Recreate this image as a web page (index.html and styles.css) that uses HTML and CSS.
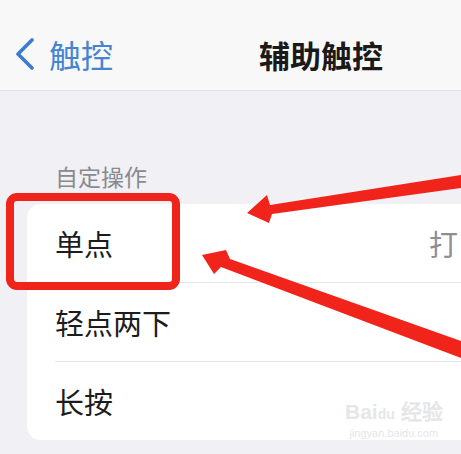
FILE: index.html
```html
<!DOCTYPE html>
<html lang="zh-CN">
<head>
  <meta charset="UTF-8">
  <meta name="viewport" content="width=device-width, initial-scale=1.0">
  <title>辅助触控</title>
  <link rel="stylesheet" href="styles.css">
</head>
<body>

  <div class="navbar">
    <a class="back" href="#">
      <svg class="chevron" width="24" height="32" viewBox="0 0 24 32">
        <polyline points="19,2 5,16 19,30" fill="none" stroke="#3b7bd0" stroke-width="3.6" stroke-linecap="round" stroke-linejoin="round"/>
      </svg>
      <span>触控</span>
    </a>
    <h1 class="title">辅助触控</h1>
  </div>

  <div class="section">
    <div class="section-header">自定操作</div>
    <div class="card">
      <div class="row">
        <span class="label">单点</span>
        <span class="value">打</span>
      </div>
      <div class="row">
        <span class="label">轻点两下</span>
      </div>
      <div class="row">
        <span class="label">长按</span>
      </div>
    </div>
  </div>

  <!-- annotation drawn over the screenshot -->
  <svg class="marks" width="461" height="454" viewBox="0 0 461 454">
    <rect x="10" y="197" width="166" height="89" rx="7" fill="none" stroke="#f0241b" stroke-width="8"/>
    <polygon points="247,213 267,195 270,205 461,175 461,188 272,214 269,223" fill="#f0241b"/>
    <polygon points="202,255 226,250 230,259 461,341 461,358 221,267 214,274" fill="#f0241b"/>
  </svg>

  <div class="watermark">
    <div class="wm-logo">Bai<span class="wm-du">du</span> 经验</div>
    <div class="wm-url">jingyan.baidu.com</div>
  </div>

</body>
</html>
```

FILE: styles.css
```css
body {
  margin: 0;
  width: 461px;
  height: 454px;
  overflow: hidden;
  position: relative;
  background: #f1f1f5;
  font-family: "Noto Sans CJK SC", "Noto Sans", sans-serif;
}
.navbar {
  box-sizing: border-box;
  height: 91px;
  padding-top: 18px;
  background: #f8f8f8;
  border-bottom: 1px solid #e2e2e4;
  display: flex;
  align-items: center;
}
.back {
  display: flex;
  align-items: center;
  gap: 12px;
  padding-left: 13px;
  color: #4584d2;
  font-size: 32px;
  text-decoration: none;
}
.title {
  margin: 0 78px 0 auto;
  font-size: 31px;
  font-weight: 700;
  color: #1a1a1a;
}
.section {
  padding-top: 70px;
}
.section-header {
  margin-left: 55px;
  font-size: 23px;
  line-height: 30px;
  color: #8a8a8e;
  margin-bottom: 13px;
}
.card {
  margin-left: 27px;
  width: 452px;
  background: #fff;
  border-radius: 14px;
}
.row {
  height: 78px;
  margin-left: 28px;
  padding-right: 21px;
  display: flex;
  align-items: center;
  justify-content: space-between;
  border-bottom: 1px solid #e6e6e8;
  font-size: 29px;
  color: #1c1c1e;
}
.row:last-child {
  border-bottom: none;
}
.value {
  color: #8e8e93;
}
.marks {
  position: absolute;
  left: 0;
  top: 0;
}
.watermark {
  position: absolute;
  left: 345px;
  top: 400px;
  color: #e6e6e8;
  font-family: "Liberation Sans", sans-serif;
  text-align: center;
}
.wm-logo {
  font-size: 21px;
  font-weight: 700;
  line-height: 24px;
}
.wm-du {
  font-size: 14px;
}
.wm-url {
  font-size: 11px;
  line-height: 14px;
}
```
